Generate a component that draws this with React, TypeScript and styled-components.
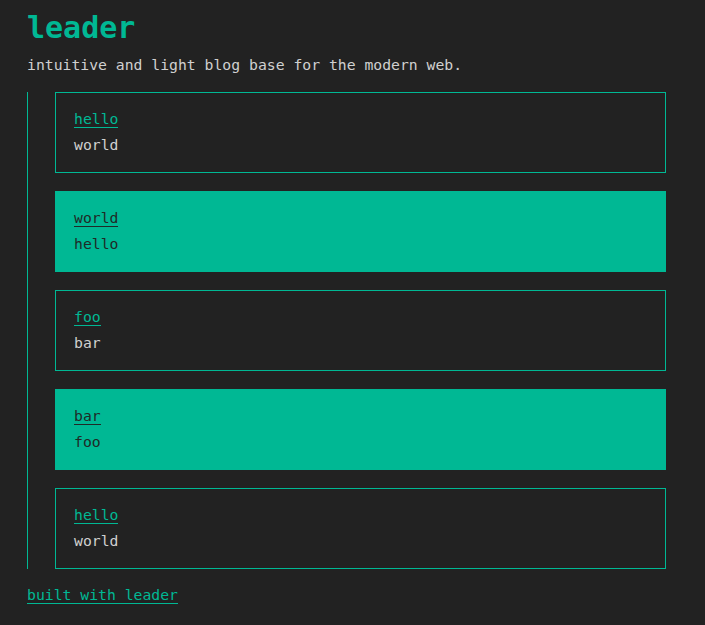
import React from "react";
import styled, { createGlobalStyle } from "styled-components";

const teal = "#00b894";
const bg = "#222222";
const text = "#d0d0d0";

const Global = createGlobalStyle`
  html, body {
    margin: 0;
    padding: 0;
    background: ${bg};
  }
  body {
    font-family: "DejaVu Sans Mono", "Liberation Mono", monospace;
    color: ${text};
  }
`;

const Page = styled.main`
  width: 639px;
  padding: 10px 0 0 27px;
  display: flex;
  flex-direction: column;
`;

const Title = styled.h1`
  margin: 0;
  font-size: 30px;
  line-height: 36px;
  font-weight: bold;
  color: ${teal};
`;

const Tagline = styled.p`
  margin: 8px 0 0;
  font-size: 14.75px;
  line-height: 22px;
`;

const Feed = styled.section`
  margin-top: 16px;
  border-left: 1px solid ${teal};
  padding-left: 27px;
  display: flex;
  flex-direction: column;
  gap: 18px;
`;

const Card = styled.article<{ $filled: boolean }>`
  border: 1px solid ${teal};
  background: ${(p) => (p.$filled ? teal : "transparent")};
  color: ${(p) => (p.$filled ? "#1f2a27" : text)};
  padding: 13px 18px 14px;
  font-size: 14.75px;
  line-height: 26px;
  display: flex;
  flex-direction: column;
  align-items: flex-start;
`;

const PostLink = styled.a<{ $filled: boolean }>`
  color: ${(p) => (p.$filled ? "#1f2a27" : teal)};
  text-decoration: none;
  border-bottom: 1px solid currentColor;
`;

const Footer = styled.footer`
  margin-top: 15px;
  font-size: 14.75px;
  line-height: 22px;
`;

const FooterLink = styled.a`
  color: ${teal};
  text-decoration: none;
  border-bottom: 1px solid ${teal};
`;

const posts = [
  { title: "hello", body: "world", filled: false },
  { title: "world", body: "hello", filled: true },
  { title: "foo", body: "bar", filled: false },
  { title: "bar", body: "foo", filled: true },
  { title: "hello", body: "world", filled: false },
];

export default function App() {
  return (
    <>
      <Global />
      <Page>
        <Title>leader</Title>
        <Tagline>intuitive and light blog base for the modern web.</Tagline>
        <Feed>
          {posts.map((p, i) => (
            <Card key={i} $filled={p.filled}>
              <span>
                <PostLink href="#" $filled={p.filled}>
                  {p.title}
                </PostLink>
              </span>
              <span>{p.body}</span>
            </Card>
          ))}
        </Feed>
        <Footer>
          <FooterLink href="#">built with leader</FooterLink>
        </Footer>
      </Page>
    </>
  );
}
